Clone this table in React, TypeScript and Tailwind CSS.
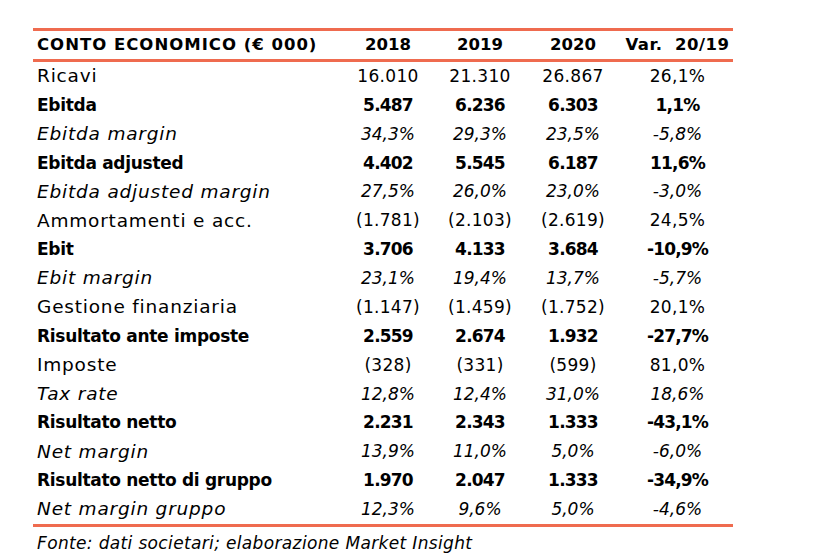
type Row = {
  label: string;
  values: string[];
  kind: "normal" | "bold" | "italic";
};

const rows: Row[] = [
  { label: "Ricavi", values: ["16.010", "21.310", "26.867", "26,1%"], kind: "normal" },
  { label: "Ebitda", values: ["5.487", "6.236", "6.303", "1,1%"], kind: "bold" },
  { label: "Ebitda margin", values: ["34,3%", "29,3%", "23,5%", "-5,8%"], kind: "italic" },
  { label: "Ebitda adjusted", values: ["4.402", "5.545", "6.187", "11,6%"], kind: "bold" },
  { label: "Ebitda adjusted margin", values: ["27,5%", "26,0%", "23,0%", "-3,0%"], kind: "italic" },
  { label: "Ammortamenti e acc.", values: ["(1.781)", "(2.103)", "(2.619)", "24,5%"], kind: "normal" },
  { label: "Ebit", values: ["3.706", "4.133", "3.684", "-10,9%"], kind: "bold" },
  { label: "Ebit margin", values: ["23,1%", "19,4%", "13,7%", "-5,7%"], kind: "italic" },
  { label: "Gestione finanziaria", values: ["(1.147)", "(1.459)", "(1.752)", "20,1%"], kind: "normal" },
  { label: "Risultato ante imposte", values: ["2.559", "2.674", "1.932", "-27,7%"], kind: "bold" },
  { label: "Imposte", values: ["(328)", "(331)", "(599)", "81,0%"], kind: "normal" },
  { label: "Tax rate", values: ["12,8%", "12,4%", "31,0%", "18,6%"], kind: "italic" },
  { label: "Risultato netto", values: ["2.231", "2.343", "1.333", "-43,1%"], kind: "bold" },
  { label: "Net margin", values: ["13,9%", "11,0%", "5,0%", "-6,0%"], kind: "italic" },
  { label: "Risultato netto di gruppo", values: ["1.970", "2.047", "1.333", "-34,9%"], kind: "bold" },
  { label: "Net margin gruppo", values: ["12,3%", "9,6%", "5,0%", "-4,6%"], kind: "italic" },
];

const grid = "grid grid-cols-[307px_96px_88px_98px_111px] items-center";

const labelClass = {
  normal: "font-normal text-[18.5px] tracking-[0.8px]",
  bold: "font-bold text-[17px] tracking-[-0.3px]",
  italic: "italic font-normal text-[18.5px] tracking-[0.8px]",
};

const valueClass = {
  normal: "font-normal tracking-[0.3px]",
  bold: "font-bold tracking-[-0.8px]",
  italic: "italic font-normal",
};

export default function App() {
  return (
    <div
      className="w-[822px] h-[557px] bg-white text-black pt-[28px] pl-[33px]"
      style={{ fontFamily: '"DejaVu Sans", sans-serif' }}
    >
      <div className="w-[700px]">
        {/* Header */}
        <div className={`${grid} h-[34px] border-y-[3px] border-[#ef6b4f] text-[16.5px] font-bold leading-none`}>
          <div className="pl-[4px] tracking-[1px] whitespace-nowrap">CONTO ECONOMICO (€ 000)</div>
          <div className="text-center">2018</div>
          <div className="text-center">2019</div>
          <div className="text-center">2020</div>
          <div className="text-center tracking-[0.5px] whitespace-nowrap">Var.&nbsp; 20/19</div>
        </div>

        {/* Body */}
        <div className="border-b-[3px] border-[#ef6b4f]">
          {rows.map((r) => (
            <div key={r.label} className={`${grid} h-[28.875px] text-[17px] leading-none`}>
              <div className={`pl-[4px] whitespace-nowrap ${labelClass[r.kind]}`}>{r.label}</div>
              {r.values.map((v, i) => (
                <div key={i} className={`text-center whitespace-nowrap ${valueClass[r.kind]}`}>
                  {v}
                </div>
              ))}
            </div>
          ))}
        </div>

        <div className="pl-[4px] pt-[4px] text-[17px] italic tracking-[0.35px]">
          Fonte: dati societari; elaborazione Market Insight
        </div>
      </div>
    </div>
  );
}
